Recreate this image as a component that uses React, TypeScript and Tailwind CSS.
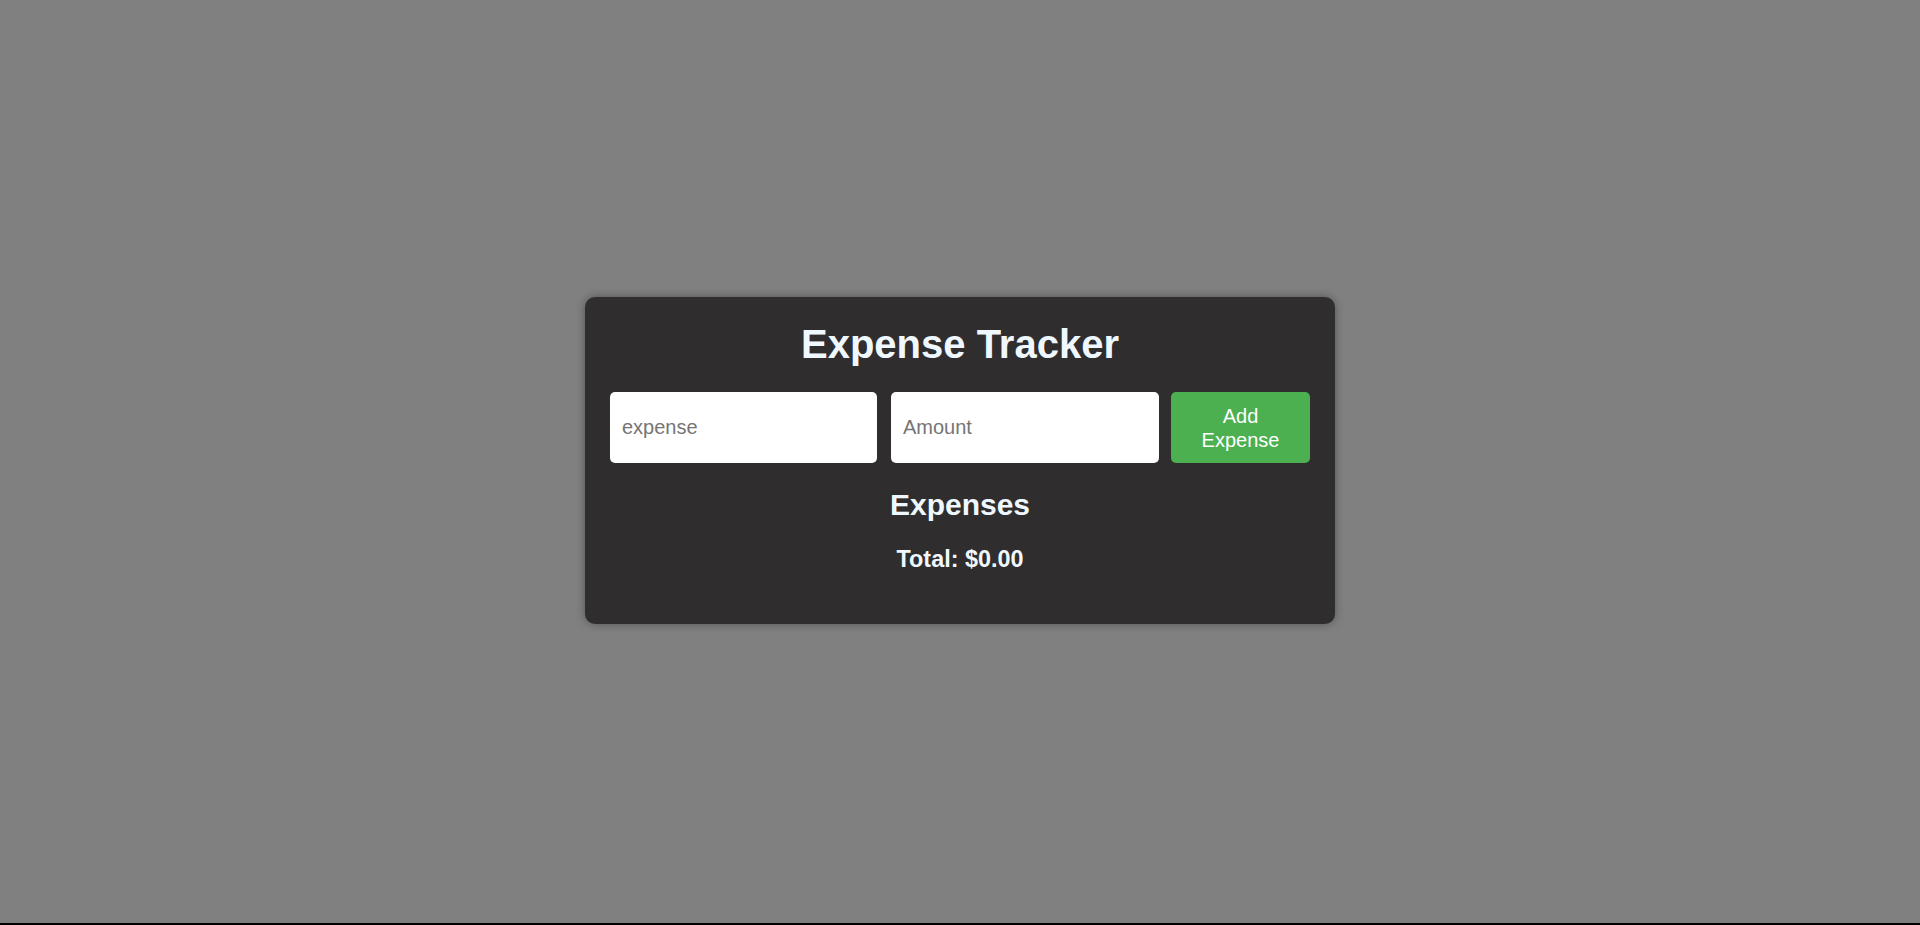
import { useState } from 'react';

export default function App() {
  const [name, setName] = useState('');
  const [amount, setAmount] = useState('');
  const [items, setItems] = useState<{ name: string; amount: number }[]>([]);

  const total = items.reduce((s, i) => s + i.amount, 0);

  const addExpense = () => {
    const value = parseFloat(amount);
    if (!name.trim() || isNaN(value)) return;
    setItems([...items, { name: name.trim(), amount: value }]);
    setName('');
    setAmount('');
  };

  return (
    <div className="h-[925px] overflow-hidden bg-black font-['Liberation_Sans',Arial,sans-serif]">
      <div className="h-[923px] bg-[#808080] flex items-center justify-center pb-[2px]">
        {/* Card */}
        <div className="w-[750px] bg-[#2f2d2e] rounded-[10px] shadow-[0_0_10px_rgba(0,0,0,0.35)] px-[25px] pt-[24px] pb-[51px] text-[#f0f8ff]">
          <h1 className="text-center text-[40px] leading-[46px] font-bold">Expense Tracker</h1>

          <div className="mt-[25px] flex h-[71px]">
            <input
              value={name}
              onChange={(e) => setName(e.target.value)}
              placeholder="expense"
              className="w-[267px] h-full bg-white rounded-[5px] pl-[12px] text-[20px] text-black placeholder:text-[#757575] outline-none"
            />
            <input
              value={amount}
              onChange={(e) => setAmount(e.target.value)}
              placeholder="Amount"
              className="ml-[14px] w-[268px] h-full bg-white rounded-[5px] pl-[12px] text-[20px] text-black placeholder:text-[#757575] outline-none"
            />
            <button
              onClick={addExpense}
              className="ml-[12px] w-[139px] h-full bg-[#4caf50] rounded-[5px] px-[12px] text-[20px] leading-[24px] text-white"
            >
              Add Expense
            </button>
          </div>

          <h2 className="mt-[25px] text-center text-[30px] leading-[34px] font-bold">Expenses</h2>
          {items.length > 0 && (
            <ul className="mt-2 text-[18px]">
              {items.map((it, i) => (
                <li key={i} className="flex justify-between py-1">
                  <span>{it.name}</span>
                  <span>${it.amount.toFixed(2)}</span>
                </li>
              ))}
            </ul>
          )}
          <h3 className="mt-[24px] text-center text-[23.4px] leading-[27px] font-bold">Total: ${total.toFixed(2)}</h3>
        </div>
      </div>
    </div>
  );
}
